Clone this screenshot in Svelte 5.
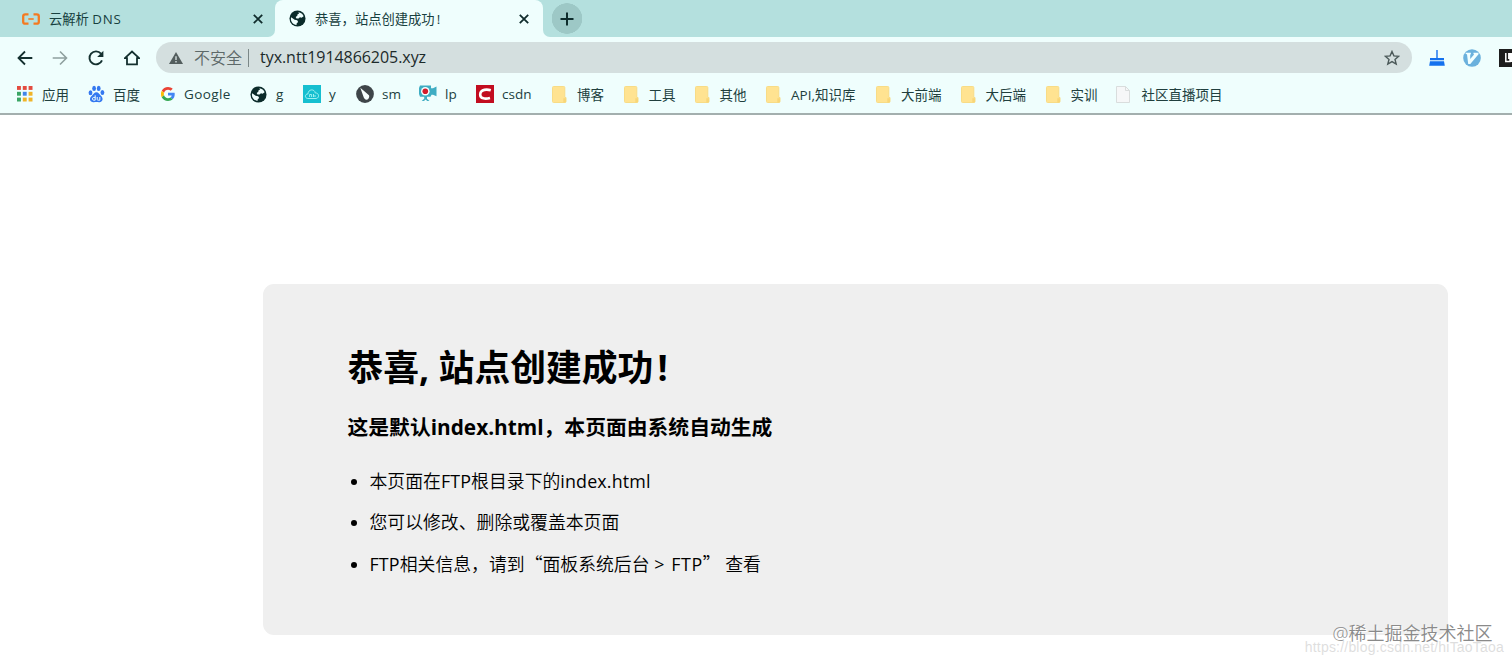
<script>
    const bookmarks = [
        { label: '应用', icon: 'apps', width: 71 },
        { label: '百度', icon: 'paw', width: 71 },
        { label: 'Google', icon: 'google', width: 92 },
        { label: 'g', icon: 'globe', width: 53 },
        { label: 'y', icon: 'cloud', width: 53 },
        { label: 'sm', icon: 'compass', width: 63 },
        { label: 'lp', icon: 'camera', width: 57 },
        { label: 'csdn', icon: 'csdn', width: 75 },
        { label: '博客', icon: 'folder', width: 71.5 },
        { label: '工具', icon: 'folder', width: 71 },
        { label: '其他', icon: 'folder', width: 71.5 },
        { label: 'API,知识库', icon: 'folder', width: 110 },
        { label: '大前端', icon: 'folder', width: 84.5 },
        { label: '大后端', icon: 'folder', width: 85 },
        { label: '实训', icon: 'folder', width: 71 },
        { label: '社区直播项目', icon: 'page', width: 110 },
    ];

    const appColors = ['#e34b3f', '#e34b3f', '#e34b3f', '#3aa564', '#4285e8', '#f0b429', '#3aa564', '#f0b429', '#f0b429'];
</script>

{#snippet globe()}
    <svg width="17" height="17" viewBox="0 0 18 18">
        <circle cx="9" cy="9" r="8.5" fill="#0b2b2a" />
        <path d="M9.8 2.3c2.8.3 4.9 2 5.7 4.3l-2.2 1.5-1.7-.4-1.5 1.4-2.2-.2-.8-1.6 1.7-1.2.3-1.6 1.6-.7zM2.3 7.6l3.7 2.6 2.7.7 1 1.7-1.5 1.5-.3 1.9C4.5 15.3 2 12.5 2 9.2z" fill="#effefd" />
    </svg>
{/snippet}

{#snippet cross()}
    <svg width="10" height="10" viewBox="0 0 10 10">
        <path d="M.8.8l8.4 8.4M9.2.8L.8 9.2" stroke="#102c2c" stroke-width="1.8" />
    </svg>
{/snippet}

{#snippet bookmarkIcon(name)}
    {#if name === 'apps'}
        <svg width="17" height="16" viewBox="-1 0 17 16">
            {#each appColors as color, i}
                <rect x={(i % 3) * 5.8} y={Math.floor(i / 3) * 5.8} width="3.9" height="3.9" fill={color} />
            {/each}
        </svg>
    {:else if name === 'paw'}
        <svg width="18" height="18" viewBox="-1 0 18 18">
            <g fill="#3478f0">
                <ellipse cx="2.5" cy="7.7" rx="1.9" ry="2.5" />
                <ellipse cx="6.1" cy="3.4" rx="1.9" ry="2.6" />
                <ellipse cx="10.7" cy="3.4" rx="1.9" ry="2.6" />
                <ellipse cx="14.4" cy="7.4" rx="1.9" ry="2.5" />
                <path d="M8.4 7.3c2.2 0 2.9 2.1 4.5 3.5 3.2 2.9 1.5 6.7-1.8 6.4-2-.2-3.4-.2-5.3 0-3.7.3-5.3-3.8-1.9-6.5 1.6-1.3 2.3-3.4 4.5-3.4z" />
            </g>
            <path d="M7.2 10.3v4.9H5.7c-1.7 0-1.7-2.8 0-2.8h1.5M9.2 12v2.3c0 .9.5 1 2.6.9V12" fill="none" stroke="#effefd" />
        </svg>
    {:else if name === 'google'}
        <svg class="google" width="14" height="14" viewBox="0 0 48 48">
            <path fill="#ea4335" d="M24 9.5c3.5 0 6.7 1.2 9.2 3.6l6.9-6.9C35.9 2.4 30.5 0 24 0 14.6 0 6.5 5.4 2.6 13.2l8 6.2C12.4 13.7 17.7 9.5 24 9.5z" />
            <path fill="#4285f4" d="M47 24.6c0-1.6-.2-3.1-.4-4.6H24v9h12.9c-.6 3-2.3 5.5-4.7 7.2l7.7 6C44.4 38 47 31.8 47 24.6z" />
            <path fill="#fbbc05" d="M10.5 28.6A14.5 14.5 0 0 1 10.5 19.4l-8-6.2a24 24 0 0 0 0 21.6z" />
            <path fill="#34a853" d="M24 48c6.5 0 11.9-2.1 15.9-5.8l-7.7-6c-2.2 1.5-4.9 2.3-8.2 2.3-6.3 0-11.6-4.2-13.5-9.9l-8 6.2C6.5 42.6 14.6 48 24 48z" />
        </svg>
    {:else if name === 'globe'}
        {@render globe()}
    {:else if name === 'cloud'}
        <svg width="18" height="18" viewBox="0 0 18 18">
            <rect width="18" height="18" fill="#16bfd0" />
            <path d="M4.8 13.5C1.5 13.3 1.6 8.9 5 8.9 5 4 11.6 3.5 12.3 8c4-.4 4.3 5.2.8 5.5zM6.6 9.5v2.5M6.6 9.5h2v2.5M10.5 9v3M12 10v2" fill="none" stroke="#a8f4f4" stroke-width=".9" />
        </svg>
    {:else if name === 'compass'}
        <svg width="18" height="18" viewBox="0 0 18 18">
            <circle cx="9" cy="9" r="8.9" fill="#3e4549" />
            <path d="M4.3 2.7l8.4 7.2c1.3 1.3 0 4.6-2 4.8-1.6.1-2.7-1.1-3.1-2.6z" fill="#f7ffff" />
        </svg>
    {:else if name === 'camera'}
        <svg class="camera" width="18" height="17" viewBox="0 0 18 17">
            <path d="M1 .5h11v2.8h2l3.5-1.7v9.6L14 9.7h-1.5l-1 2H1L0 9V3zM5.2 11h2.8v2.7l2.5 2.3H8.2L6.6 14.500 5 16H2.700l2.500-2.300z" fill="#3fadc3" />
            <circle cx="6.3" cy="6.3" r="4.3" fill="#f3ffff" />
            <circle cx="6.3" cy="6.3" r="2.8" fill="#d41c2c" />
        </svg>
    {:else if name === 'csdn'}
        <svg width="18" height="18" viewBox="0 0 18 18">
            <rect width="18" height="18" fill="#c20d20" />
            <path d="M14.8 5.3C11.5 4.3 4.6 3.8 4.2 9.3c-.3 4.7 5.5 4.9 9.8 3.6" fill="none" stroke="#fff" stroke-width="2.6" />
        </svg>
    {:else if name === 'folder'}
        <svg class="folder" width="15" height="17" viewBox="0 0 15 17">
            <path d="M1.5.5h10.3q1 0 1 1v10h1.2v4q0 1-1 1H1.5q-1 0-1-1v-14q0-1 1-1z" fill="#ffe391" stroke="#f8dc86" />
            <path d="M11.3 12.3h2.7v3.2q0 1-1 1h-1.700z" fill="#f8d678" />
        </svg>
    {:else}
        <svg width="14" height="17" viewBox="0 0 14 17">
            <path d="M.5.5h9l4 4v12H.5z" fill="#f6f7f8" stroke="#d9dddd" />
            <path d="M9.5.5v4h4" fill="none" stroke="#d9dddd" />
        </svg>
    {/if}
{/snippet}

<div class="browser">
    <div class="tabs">
        <div class="tab first">
            <svg width="18" height="12" viewBox="0 0 18 12">
                <path d="M6.5 1.3H3.2Q1.2 1.3 1.2 3.3v5.4q0 2 2 2h3.3M11.5 1.3h3.3q2 0 2 2v5.4q0 2-2 2h-3.3" fill="none" stroke="#f47a20" stroke-width="2.3" />
                <path d="M6.3 6h5.4" stroke="#f47a20" stroke-width="1.6" />
            </svg>
            <span class="title">云解析 <b>DNS</b></span>
            {@render cross()}
        </div>
        <div class="tab active">
            {@render globe()}
            <span class="title">恭喜，站点创建成功<i>!</i></span>
            {@render cross()}
        </div>
        <div class="new-tab">
            <svg width="14" height="14" viewBox="0 0 14 14">
                <path d="M7 .5v13M.5 7h13" stroke="#0e2c2c" stroke-width="2" />
            </svg>
        </div>
    </div>

    <div class="toolbar">
        <div class="nav">
            <svg width="16" height="16" viewBox="0 0 16 16">
                <path d="M15.3 8H2M8 1.5L1.5 8 8 14.5" fill="none" stroke="#14302f" stroke-width="1.8" />
            </svg>
            <svg width="16" height="16" viewBox="0 0 16 16">
                <path d="M.7 8H14M8 1.5L14.5 8 8 14.5" fill="none" stroke="#8fa09f" stroke-width="1.6" />
            </svg>
            <svg width="16" height="16" viewBox="0 0 16 16">
                <path d="M14 10.3A6.5 6.5 0 1 1 13 3.7" fill="none" stroke="#14302f" stroke-width="1.9" />
                <path d="M15.4.7v6.2H9.2z" fill="#14302f" />
            </svg>
            <svg width="16" height="16" viewBox="0 0 16 16">
                <path d="M.9 8.2L8 1.6l7.1 6.6H13v6.2H3V8.2z" fill="none" stroke="#14302f" stroke-width="1.8" />
            </svg>
        </div>
        <div class="address">
            <svg width="14" height="12" viewBox="0 0 14 12">
                <path d="M7 0l7 12H0z" fill="#535e5e" />
                <path d="M7 4.2v3.8M7 9v1.5" stroke="#d4dfdf" stroke-width="1.4" />
            </svg>
            <span class="insecure">不安全</span>
            <span class="divider"></span>
            <span class="url">tyx.ntt1914866205.xyz</span>
            <svg class="star" width="16" height="16" viewBox="0 0 16 16">
                <path d="M8 1.5l1.9 4.4 4.8.4-3.7 3.1 1.2 4.7L8 11.6l-4.2 2.5L5 9.4 1.3 6.3l4.8-.4z" fill="none" stroke="#4b5959" stroke-width="1.4" />
            </svg>
        </div>
        <div class="extensions">
            <svg width="16" height="16" viewBox="0 0 16 16">
                <path d="M7.3 0h1.4v8H15v2.2H1V8h6.3zM1 11.3h14l.8 4.4H.2z" fill="#1471ee" />
            </svg>
            <svg width="18" height="18" viewBox="0 0 18 18">
                <circle cx="9" cy="9" r="8.8" fill="#6bb1dd" />
                <path d="M2.7 3.7h5.2v1.5l-.7.3v4.4l3.9-4.5-.6-.3V3.7h5v1.5L7.3 15H5.2L4 5.3l-1.3-.2z" fill="#f2ffff" />
            </svg>
            <svg width="18" height="18" viewBox="0 0 18 18">
                <rect width="18" height="18" fill="#1d1d1d" />
                <path d="M6.8 4v8.500H11V4M9.8 4v6M12.5 4v9" fill="none" stroke="#fff" stroke-width="1.5" />
            </svg>
        </div>
    </div>

    <div class="bookmarks">
        {#each bookmarks as item}
            <div class="bookmark" style="width: {item.width}px">
                <span class="icon">{@render bookmarkIcon(item.icon)}</span>
                <span class="label" class:wide={item.icon === 'google'}>{item.label}</span>
            </div>
        {/each}
    </div>

    <main>
        <div class="panel">
            <h1>恭喜, 站点创建成功<span>!</span></h1>
            <h3>这是默认index.html，本页面由系统自动生成</h3>
            <ul>
                <li>本页面在<span>FTP</span>根目录下的<span>index.html</span></li>
                <li>您可以修改、删除或覆盖本页面</li>
                <li><span>FTP</span>相关信息，请到<q>“</q>面板系统后台 <span class="path">&gt; FTP</span><q>”</q> 查看</li>
            </ul>
        </div>
    </main>

    <div class="mark author">@稀土掘金技术社区</div>
    <div class="mark source">https://blog.csdn.net/hiTaoTaoa</div>
</div>

<style>
    :global(body) {
        margin: 0;
        background: #fff;
    }
    .browser {
        position: relative;
        width: 1512px;
        height: 663px;
        overflow: hidden;
        font-family: "Open Sans", "Noto Sans CJK SC", sans-serif;
        color: #000;
    }
    svg {
        display: block;
        flex: none;
    }
    .tabs {
        display: flex;
        height: 37px;
        background: linear-gradient(#effefd, #effefd) 268px 100% / 283px 8px no-repeat #b4e0de;
    }
    .tab {
        display: flex;
        align-items: center;
        box-sizing: border-box;
        font-size: 13.3px;
        color: #17403f;
        white-space: nowrap;
    }
    .tab.first {
        width: 275px;
        padding: 0 12px 0 22px;
        gap: 9px;
        background: #b4e0de;
        border-radius: 0 0 7px 0;
    }
    .tab.active {
        width: 268px;
        padding: 0 14px;
        gap: 9px;
        background: #effefd;
        border-radius: 8px 8px 0 0;
    }
    .title {
        flex: 1;
        padding-bottom: 1px;
    }
    .title b {
        font-weight: 400;
        letter-spacing: 0.7px;
    }
    .title i {
        font-style: normal;
        margin-left: 2px;
    }
    .new-tab {
        flex: 1;
        display: flex;
        align-items: center;
        padding-left: 17px;
        border-radius: 0 0 0 7px;
        background: radial-gradient(circle at 24px 18.5px, #9dc8c6 15px, #b4e0de 15.5px);
    }
    .toolbar {
        display: flex;
        align-items: center;
        height: 41px;
        background: #effefd;
    }
    .nav {
        display: flex;
        flex: none;
        gap: 19.7px;
        width: 139.5px;
        padding-left: 16.5px;
    }
    .address {
        display: flex;
        flex: none;
        align-items: center;
        box-sizing: border-box;
        width: 1256px;
        height: 31px;
        padding: 0 12px 0 13px;
        border-radius: 16px;
        background: #d4dfdf;
        font-size: 16px;
        white-space: nowrap;
    }
    .insecure {
        margin-left: 11px;
        padding-bottom: 1px;
        color: #5d6969;
        font-weight: 350;
    }
    .divider {
        width: 1px;
        height: 18px;
        margin: 0 11px 0 6px;
        background: #7b8787;
    }
    .url {
        padding-bottom: 1px;
        color: #1c2a2a;
        letter-spacing: -0.05px;
    }
    .star {
        margin-left: auto;
    }
    .extensions {
        display: flex;
        align-items: center;
        gap: 18px;
        padding-left: 17px;
    }
    .bookmarks {
        display: flex;
        align-items: center;
        box-sizing: border-box;
        height: 37px;
        padding: 0 0 3px 16px;
        background: #effefd;
        border-bottom: 2px solid #a3afae;
        font-size: 13.5px;
        color: #213f3e;
        white-space: nowrap;
    }
    .bookmark {
        display: flex;
        align-items: center;
        flex: none;
    }
    .label {
        padding-bottom: 1px;
    }
    .wide {
        letter-spacing: 0.4px;
    }
    .icon {
        display: flex;
        align-items: center;
        width: 26px;
        height: 18px;
        flex: none;
    }
    .google {
        margin-left: 3px;
    }
    .camera {
        margin-bottom: 2px;
    }
    .folder {
        margin-left: 1px;
    }
    main {
        padding: 169px 64px 0 263px;
    }
    .panel {
        box-sizing: border-box;
        height: 351px;
        padding: 56px 85px 0 84.5px;
        border-radius: 11px;
        background: #efefef;
    }
    h1 {
        margin: 0;
        font-size: 35.8px;
        line-height: 54px;
    }
    h1 span {
        margin-left: 4px;
    }
    h3 {
        margin: 17px 0 0;
        font-size: 20.8px;
        line-height: 32px;
    }
    ul {
        margin: 18px 0 0;
        padding-left: 22px;
        font-size: 17.85px;
        font-weight: 350;
        line-height: 41px;
    }
    li span {
        font-weight: 400;
        letter-spacing: 0.15px;
    }
    li .path {
        letter-spacing: 0.6px;
        word-spacing: 1px;
    }
    q {
        font-family: "Noto Sans CJK SC", sans-serif;
        quotes: none;
    }
    q::before,
    q::after {
        content: none;
    }
    .mark {
        position: absolute;
        white-space: nowrap;
    }
    .author {
        top: 620px;
        right: 19.5px;
        font-size: 18px;
        line-height: 27px;
        font-weight: 350;
        color: #8a8a8a;
        text-shadow: 1px 1px #fff;
    }
    .source {
        top: 637px;
        right: 8px;
        font-family: "Liberation Sans", sans-serif;
        font-size: 14px;
        letter-spacing: 0.2px;
        line-height: 20px;
        color: rgba(190, 190, 190, 0.5);
    }
</style>
